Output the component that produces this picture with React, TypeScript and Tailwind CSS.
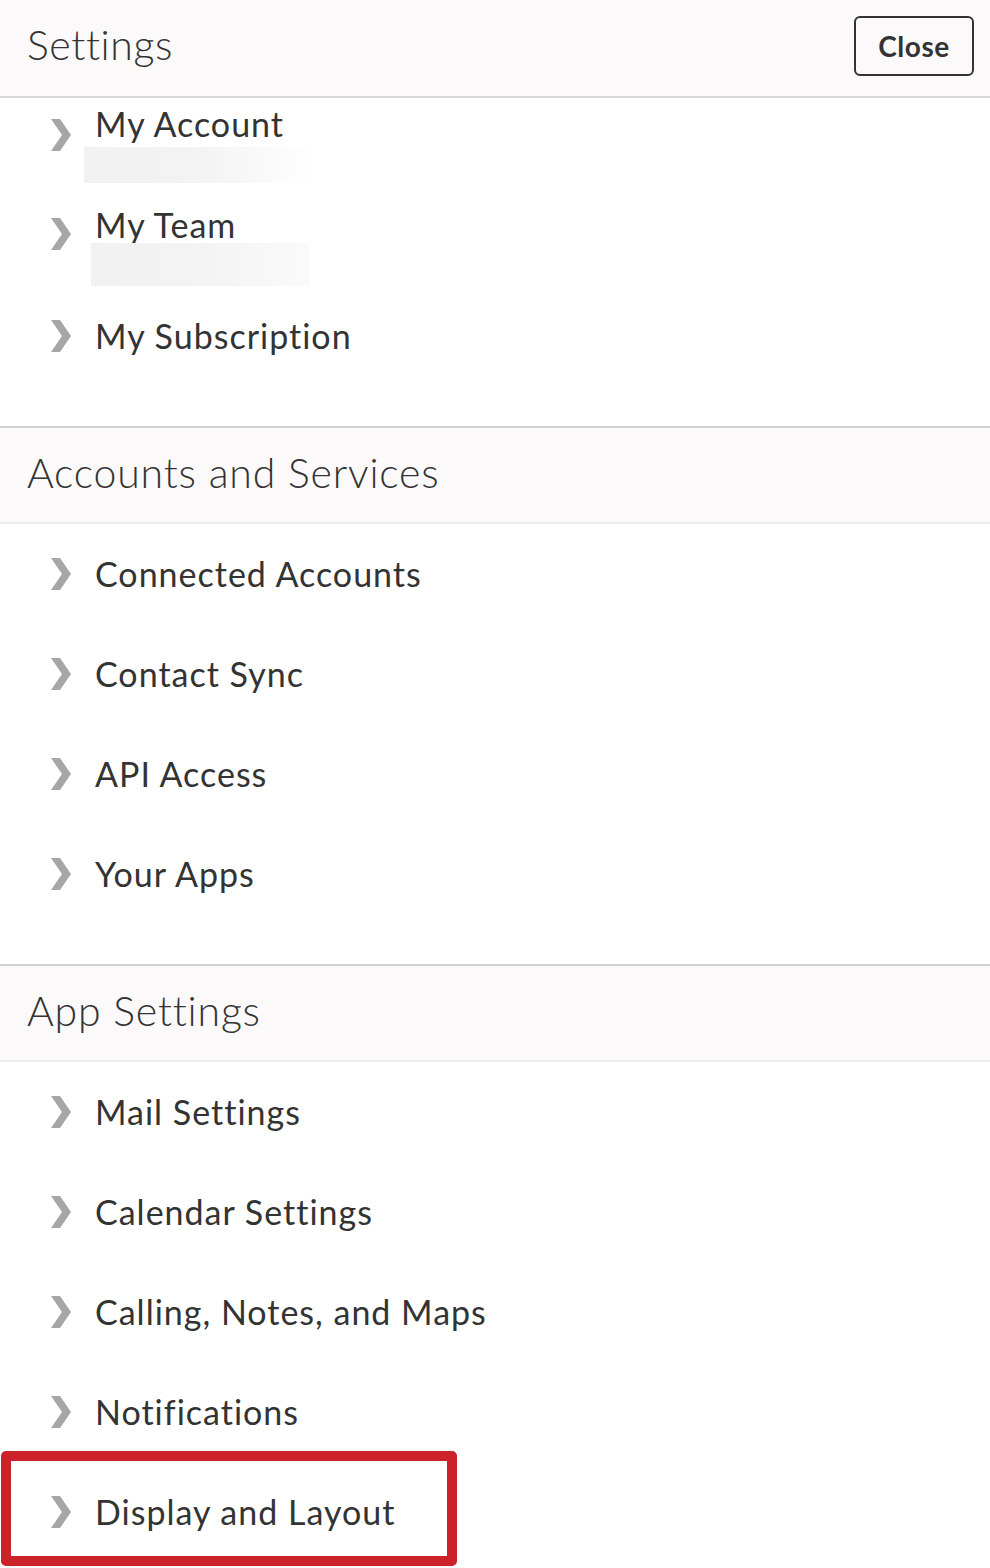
import { ReactNode } from "react";

const font = { fontFamily: "Lato, 'Open Sans', sans-serif" };

const Chevron = ({ className = "" }: { className?: string }) => (
  <svg width="20" height="32" viewBox="0 0 20 32" className={`shrink-0 ${className}`}>
    <polygon points="0,0 9,0 20,16 9,32 0,32 11,16" fill="#a6a6a6" />
  </svg>
);

const Row = ({ label }: { label: string }) => (
  <div className="flex h-[100px] items-center pl-[51px]">
    <Chevron />
    <span className="ml-[24px] text-[34px] leading-[40px] tracking-[1px] text-[#333]">{label}</span>
  </div>
);

const SectionHeader = ({ title, children }: { title: string; children?: ReactNode }) => (
  <div className="flex h-[96px] items-center justify-between border-b-2 border-[#ececec] bg-[#fbf9fa] pb-[5px] pl-[27px] pr-[16px]">
    <h2 className="text-[41px] font-light tracking-[0.8px] text-[#333]">{title}</h2>
    {children}
  </div>
);

export default function App() {
  return (
    <div className="min-h-[1568px] w-[990px] bg-white" style={font}>
      {/* Settings */}
      <div className="flex h-[98px] items-center justify-between border-b-2 border-[#d6d6d6] bg-[#fbf9fa] pb-[4px] pl-[27px] pr-[16px]">
        <h1 className="mt-[-2px] text-[41px] font-light tracking-[0.6px] text-[#333]">Settings</h1>
        <button className="h-[60px] w-[120px] rounded-[6px] border-2 border-[#333] text-[28px] font-bold tracking-[0.5px] text-[#333]">
          Close
        </button>
      </div>

      <div className="pb-[40px]">
        <div className="flex h-[100px] pl-[51px] pt-[6px]">
          <Chevron className="mt-[15px]" />
          <div className="ml-[24px] flex flex-col">
            <span className="text-[34px] leading-[40px] tracking-[1px] text-[#333]">My Account</span>
            <div className="ml-[-11px] mt-[3px] h-[36px] w-[232px] bg-gradient-to-r from-[#f1f1f1] via-[#f3f3f3] to-white" />
          </div>
        </div>
        <div className="flex h-[88px] pl-[51px] pt-[7px]">
          <Chevron className="mt-[13px]" />
          <div className="ml-[24px] flex flex-col">
            <span className="text-[34px] leading-[40px] tracking-[1px] text-[#333]">My Team</span>
            <div className="ml-[-4px] mt-[-2px] h-[54px] w-[218px] bg-gradient-to-r from-[#f1f1f1] via-[#f3f3f3] to-[#fafafa]" />
          </div>
        </div>
        <Row label="My Subscription" />
      </div>

      <div className="border-t-2 border-[#d0d0d0]">
        <SectionHeader title="Accounts and Services" />
        <div className="pb-[40px]">
          <Row label="Connected Accounts" />
          <Row label="Contact Sync" />
          <Row label="API Access" />
          <Row label="Your Apps" />
        </div>
      </div>

      <div className="border-t-2 border-[#d0d0d0]">
        <SectionHeader title="App Settings" />
        <div>
          <Row label="Mail Settings" />
          <Row label="Calendar Settings" />
          <Row label="Calling, Notes, and Maps" />
          <Row label="Notifications" />
          <div className="relative">
            <Row label="Display and Layout" />
            <div className="pointer-events-none absolute left-[1px] top-[-11px] h-[115px] w-[456px] rounded-[5px] border-[10px] border-[#cc2229]" />
          </div>
        </div>
      </div>
    </div>
  );
}
